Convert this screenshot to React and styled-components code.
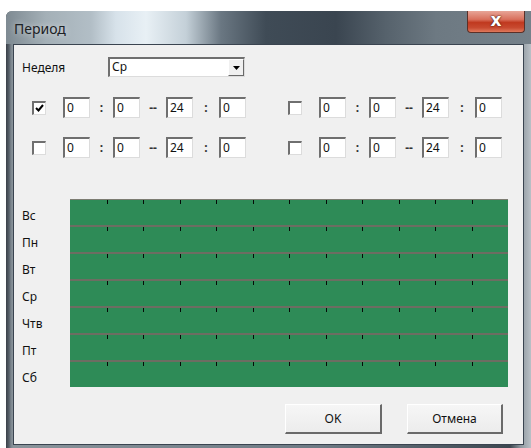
import React from "react";
import styled, { createGlobalStyle } from "styled-components";

const Global = createGlobalStyle`
  html, body { margin: 0; padding: 0; background: #ffffff; }
  body { width: 531px; height: 448px; overflow: hidden; font-family: "Noto Sans", "Open Sans", sans-serif; }
`;

const Window = styled.div`
  margin: 11px 0 0 6px;
  width: 525px;
  height: 437px;
  display: flex;
  flex-direction: column;
  border-top-left-radius: 6px;
  overflow: hidden;
  background: linear-gradient(to right, #3a4048 0px, #565f68 3px, #7c868e 5px, #8a949b 7px, #6e7a84 60%, #3d4750 96%, #8e979e 98%, #b9c0c6 100%);
`;

const TitleBar = styled.div`
  height: 33px;
  display: flex;
  align-items: flex-start;
  justify-content: space-between;
  background: linear-gradient(
    to right,
    #7e8a92 0px,
    #a4b0b7 40px,
    #b2bec6 85px,
    #d7e2ea 110px,
    #e8f0f5 140px,
    #c4d0d8 180px,
    #6a7782 215px,
    #3f4b56 260px,
    #3a4550 330px,
    #56626c 380px,
    #6d7982 430px,
    #75818a 100%
  );
`;

const Title = styled.span`
  margin: 8px 0 0 8px;
  font-size: 14px;
  color: #1d2226;
  text-shadow: 0 0 6px rgba(255, 255, 255, 0.7);
`;

const CloseButton = styled.div`
  margin-right: 6px;
  width: 58px;
  height: 22px;
  box-sizing: border-box;
  border: 1px solid #5b3028;
  border-top: none;
  border-radius: 0 0 4px 4px;
  background: linear-gradient(to bottom, #e7a597 0%, #d9705c 40%, #c0391f 55%, #c84a30 80%, #e07a5c 100%);
  display: flex;
  align-items: center;
  justify-content: center;
  padding-bottom: 2px;
  color: #ffffff;
  font-family: "DejaVu Sans", sans-serif;
  font-weight: bold;
  font-size: 17px;
  line-height: 1;
  text-shadow: 0 0 2px #4a1a10, 0 0 1px #4a1a10;
`;

const Frame = styled.div`
  flex: 1;
  display: flex;
  margin: 0 7px 3px 7px;
`;

const Client = styled.div`
  flex: 1;
  border: 1px solid #3a4450;
  background: #f0f0f0;
  display: flex;
  flex-direction: column;
  padding-left: 8px;
  font-size: 12px;
  color: #111111;
`;

const WeekRow = styled.div`
  margin-top: 12px;
  display: flex;
  align-items: center;
  height: 20px;
`;

const Label = styled.span`
  width: 86px;
`;

const Sunken = styled.div`
  box-sizing: border-box;
  background: #ffffff;
  border-style: solid;
  border-width: 2px 1px 1px 2px;
  border-color: #6f6f6f #dcdcdc #dcdcdc #6f6f6f;
`;

const Select = styled(Sunken)`
  width: 137px;
  height: 20px;
  display: flex;
  align-items: stretch;
`;

const SelectText = styled.span`
  flex: 1;
  padding-left: 2px;
  line-height: 16px;
`;

const DropButton = styled.div`
  width: 16px;
  background: #f0f0f0;
  box-sizing: border-box;
  border-style: solid;
  border-width: 1px;
  border-color: #ffffff #696969 #696969 #ffffff;
  display: flex;
  align-items: center;
  justify-content: center;
`;

const TimeGrid = styled.div`
  margin: 20px 0 0 10px;
  display: grid;
  grid-template-columns: 214px 214px;
  column-gap: 42px;
  row-gap: 19px;
`;

const TimeGroup = styled.div`
  display: flex;
  align-items: center;
  height: 21px;
`;

const Check = styled(Sunken)`
  width: 14px;
  height: 14px;
  margin-right: 17px;
  display: flex;
  align-items: center;
  justify-content: center;
`;

const NumBox = styled(Sunken)`
  width: 27px;
  height: 21px;
  padding-left: 2px;
  line-height: 18px;
`;

const Sep = styled.span`
  width: ${(p) => p.$w}px;
  text-align: center;
  font-weight: bold;
  color: #333333;
`;

const Schedule = styled.div`
  margin-top: 41px;
  display: flex;
`;

const DayLabels = styled.div`
  width: 48px;
  display: flex;
  flex-direction: column;
  padding-top: 1px;
`;

const DayLabel = styled.span`
  height: 27px;
  line-height: 32px;
`;

const Chart = styled.div`
  width: 438px;
  border-top: 1px solid #7c7c72;
  display: flex;
  flex-direction: column;
`;

const ChartRow = styled.div`
  height: 25px;
  display: grid;
  grid-template-columns: repeat(12, 1fr);
  background: #2e8b57;
  border-bottom: ${(p) => (p.$last ? "none" : "2px solid #6d6d62")};
`;

const Slot = styled.div`
  position: relative;
  &::before {
    content: "";
    display: ${(p) => (p.$first ? "none" : "block")};
    position: absolute;
    left: 0;
    top: 0;
    width: 1px;
    height: 4px;
    background: #050a07;
  }
`;

const Buttons = styled.div`
  margin-top: 15px;
  display: flex;
  justify-content: flex-end;
  gap: 25px;
  padding-right: 20px;
`;

const Button = styled.div`
  width: ${(p) => p.$w}px;
  height: 30px;
  box-sizing: border-box;
  background: linear-gradient(to bottom, #f6f6f6, #ececec);
  border-style: solid;
  border-width: 1px 2px 2px 1px;
  border-color: #ffffff #6a6a6a #6a6a6a #ffffff;
  display: flex;
  align-items: center;
  justify-content: center;
`;

const days = ["Вс", "Пн", "Вт", "Ср", "Чтв", "Пт", "Сб"];
const groups = [true, false, false, false];

function TimeRange({ checked }) {
  return (
    <TimeGroup>
      <Check>
        {checked && (
          <svg width="9" height="8" viewBox="0 0 9 8">
            <polyline points="1,4 3.5,6.5 8,1" fill="none" stroke="#000" strokeWidth="2" />
          </svg>
        )}
      </Check>
      <NumBox>0</NumBox>
      <Sep $w={23}>:</Sep>
      <NumBox>0</NumBox>
      <Sep $w={26}>--</Sep>
      <NumBox>24</NumBox>
      <Sep $w={26}>:</Sep>
      <NumBox>0</NumBox>
    </TimeGroup>
  );
}

export default function App() {
  return (
    <>
      <Global />
      <Window>
        <TitleBar>
          <Title>Период</Title>
          <CloseButton>x</CloseButton>
        </TitleBar>
        <Frame>
          <Client>
            <WeekRow>
              <Label>Неделя</Label>
              <Select>
                <SelectText>Ср</SelectText>
                <DropButton>
                  <svg width="7" height="4" viewBox="0 0 7 4">
                    <polygon points="0,0 7,0 3.5,4" fill="#000" />
                  </svg>
                </DropButton>
              </Select>
            </WeekRow>
            <TimeGrid>
              {groups.map((c, i) => (
                <TimeRange key={i} checked={c} />
              ))}
            </TimeGrid>
            <Schedule>
              <DayLabels>
                {days.map((d) => (
                  <DayLabel key={d}>{d}</DayLabel>
                ))}
              </DayLabels>
              <Chart>
                {days.map((d, r) => (
                  <ChartRow key={d} $last={r === days.length - 1}>
                    {Array.from({ length: 12 }, (_, k) => (
                      <Slot key={k} $first={k === 0} />
                    ))}
                  </ChartRow>
                ))}
              </Chart>
            </Schedule>
            <Buttons>
              <Button $w={97}>OK</Button>
              <Button $w={96}>Отмена</Button>
            </Buttons>
          </Client>
        </Frame>
      </Window>
    </>
  );
}
